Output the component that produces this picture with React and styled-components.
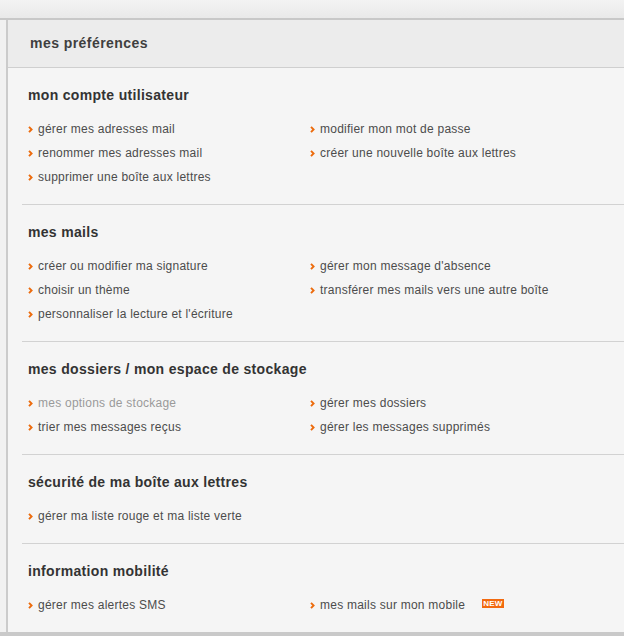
import React from "react";
import styled, { createGlobalStyle } from "styled-components";

const GlobalStyle = createGlobalStyle`
  html, body {
    margin: 0;
    padding: 0;
    background: #efefef;
  }
  body {
    font-family: "Liberation Sans", Arial, sans-serif;
  }
`;

const sections = [
  {
    title: "mon compte utilisateur",
    links: [
      { label: "gérer mes adresses mail" },
      { label: "modifier mon mot de passe" },
      { label: "renommer mes adresses mail" },
      { label: "créer une nouvelle boîte aux lettres" },
      { label: "supprimer une boîte aux lettres" },
    ],
  },
  {
    title: "mes mails",
    links: [
      { label: "créer ou modifier ma signature" },
      { label: "gérer mon message d'absence" },
      { label: "choisir un thème" },
      { label: "transférer mes mails vers une autre boîte" },
      { label: "personnaliser la lecture et l'écriture" },
    ],
  },
  {
    title: "mes dossiers / mon espace de stockage",
    links: [
      { label: "mes options de stockage", disabled: true },
      { label: "gérer mes dossiers" },
      { label: "trier mes messages reçus" },
      { label: "gérer les messages supprimés" },
    ],
  },
  {
    title: "sécurité de ma boîte aux lettres",
    links: [{ label: "gérer ma liste rouge et ma liste verte" }],
  },
  {
    title: "information mobilité",
    links: [
      { label: "gérer mes alertes SMS" },
      { label: "mes mails sur mon mobile", isNew: true },
    ],
  },
];

const Arrow = () => (
  <ArrowIcon width="5" height="7" viewBox="0 0 5 7" aria-hidden="true">
    <path
      d="M1 0.8 L3.6 3.5 L1 6.2"
      fill="none"
      stroke="#ec6b0c"
      strokeWidth="1.9"
    />
  </ArrowIcon>
);

const App = () => {
  return (
    <>
      <GlobalStyle />
      <Page>
        <TopStrip />
        <Body>
          <Gutter />
          <Panel>
            <PanelHeader>mes préférences</PanelHeader>
            {sections.map((section) => (
              <Section key={section.title}>
                <SectionTitle>{section.title}</SectionTitle>
                <LinkGrid>
                  {section.links.map((link) => (
                    <LinkItem key={link.label} $disabled={link.disabled}>
                      <Arrow />
                      <span>{link.label}</span>
                      {link.isNew && <NewBadge>NEW</NewBadge>}
                    </LinkItem>
                  ))}
                </LinkGrid>
              </Section>
            ))}
          </Panel>
        </Body>
      </Page>
    </>
  );
};

const Page = styled.div`
  width: 624px;
  height: 636px;
  overflow: hidden;
  display: flex;
  flex-direction: column;
  border-bottom: 4px solid #c9c9c9;
  box-sizing: border-box;
`;

const TopStrip = styled.div`
  height: 18px;
  flex-shrink: 0;
  background: linear-gradient(#f3f3f3, #e9e9e9);
  border-bottom: 2px solid #c8c8c8;
`;

const Body = styled.div`
  flex: 1;
  display: flex;
  min-height: 0;
`;

const Gutter = styled.div`
  width: 6px;
  flex-shrink: 0;
  background: #f1f1f1;
`;

const Panel = styled.div`
  flex: 1;
  background: #f5f5f5;
  border-left: 2px solid #cbcbcb;
  display: flex;
  flex-direction: column;
`;

const PanelHeader = styled.div`
  height: 46px;
  padding-bottom: 1px;
  display: flex;
  align-items: center;
  padding-left: 22px;
  background: #ececec;
  border-bottom: 1px solid #cfcfcf;
  color: #3f3f3f;
  font-size: 14px;
  font-weight: bold;
  letter-spacing: 0.45px;
`;

const Section = styled.div`
  margin-left: 14px;
  padding: 17px 0 15px 6px;
  border-bottom: 1px solid #d2d2d2;

  &:last-child {
    border-bottom: none;
  }
`;

const SectionTitle = styled.div`
  height: 20px;
  line-height: 20px;
  margin-bottom: 12px;
  color: #333;
  font-size: 14px;
  font-weight: bold;
  letter-spacing: 0.32px;
`;

const LinkGrid = styled.div`
  display: grid;
  grid-template-columns: 282px 1fr;
  grid-auto-rows: 24px;
`;

const LinkItem = styled.a`
  display: flex;
  align-items: center;
  gap: 5px;
  font-size: 12px;
  letter-spacing: 0.24px;
  color: ${(p) => (p.$disabled ? "#9a9a9a" : "#4c4c4c")};
  text-decoration: none;
  cursor: pointer;
  white-space: nowrap;
`;

const ArrowIcon = styled.svg`
  flex-shrink: 0;
  margin-top: 1px;
`;

const NewBadge = styled.span`
  margin-left: 12px;
  padding: 0 1px;
  height: 9px;
  line-height: 9px;
  background: #f26a10;
  color: #fff;
  font-size: 8px;
  font-weight: bold;
  margin-top: -3px;
`;

export default App;
